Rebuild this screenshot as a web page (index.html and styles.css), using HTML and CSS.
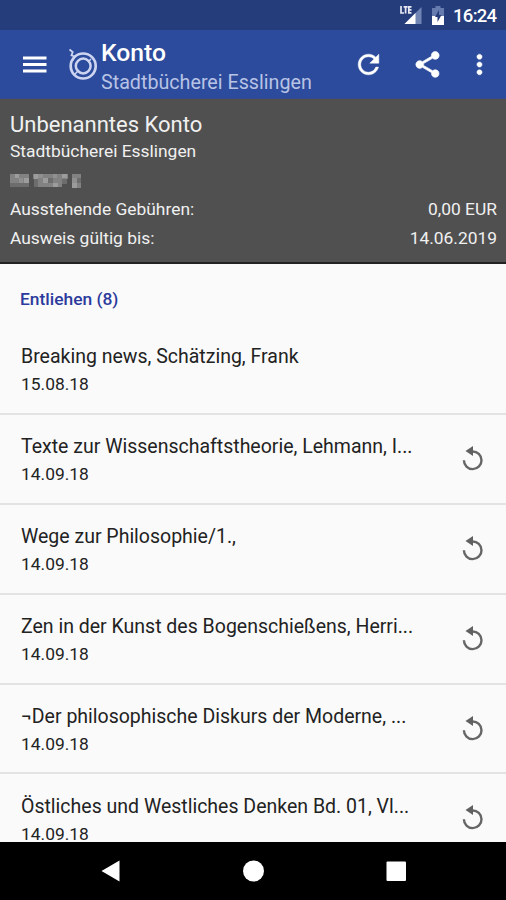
FILE: index.html
```html
<!DOCTYPE html>
<html lang="de">
<head>
<meta charset="utf-8">
<title>Konto</title>
<link rel="stylesheet" href="styles.css">
</head>
<body>
<svg class="defs" width="0" height="0">
  <symbol id="renew" viewBox="0 0 34 34"><path d="M17.500 9.500a8.800 8.800 0 1 1-8.600 8.800" fill="none" stroke="#666" stroke-width="2.400"/><path d="M10.500 9L18 4v10z"/></symbol>
</svg>
<div class="status">
  <svg class="signal" width="22" height="19" viewBox="0 0 22 19">
    <path d="M21.500 1V18H4.500z" fill="#7185b5"/><path d="M15.500 7V18H4.500z" fill="#fff"/>
    <path d="M1 0V7H4M3.600 .8H7.600M5.600 .8V7.500M11.500 .8H8.800V6.800H11.500M8.800 3.800H11.500" fill="none" stroke="#e6e9f2" stroke-width="1.700"/>
  </svg>
  <svg class="battery" width="12" height="19" viewBox="0 0 12 19">
    <path d="M3.500 0h5v2H12v9H0V2h3.500z" fill="#667bae"/><path d="M0 10h12v9H0z" fill="#fff"/><path d="M7 4L3 11h2.500v5L9.500 9H7z" fill="#263d7c"/>
  </svg>
  <span class="clock">16:24</span>
</div>
<header class="appbar">
  <svg class="menu" width="24" height="18" viewBox="0 0 24 18"><path d="M0 .5h23.500v3H0zM0 7h23.500v3H0zM0 13.500h23.500v3H0z"/></svg>
  <svg class="logo" width="30" height="32" viewBox="0 0 30 32">
    <g fill="none" stroke="#cdd5f0"><circle cx="15.200" cy="18" r="12.500" stroke-width="2.700"/><circle cx="15.200" cy="18" r="7.400" stroke-width="2.500"/><path d="M6 27l5-5M20 14l3-3" stroke-width="1.500"/><path d="M1.500 1.500l3.200 2.500-1.200 3.500 3.500 1-2.500 4" stroke-width="1.800"/></g>
  </svg>
  <div class="titles"><div class="title">Konto</div><div class="subtitle">Stadtbücherei Esslingen</div></div>
  <svg class="refresh" width="31" height="31" viewBox="0 0 24 24"><path d="M17.650 6.350C16.200 4.900 14.210 4 12 4c-4.420 0-7.990 3.580-7.990 8s3.570 8 7.990 8c3.730 0 6.840-2.550 7.730-6h-2.080c-.82 2.330-3.040 4-5.650 4-3.310 0-6-2.690-6-6s2.690-6 6-6c1.660 0 3.140.69 4.220 1.780L13 11h7V4l-2.350 2.350z" stroke="#fff" stroke-width=".35"/></svg>
  <svg class="share" width="31" height="31" viewBox="0 0 24 24"><path d="M18 16.080c-.76 0-1.440.3-1.960.77L8.910 12.700c.05-.23.09-.46.09-.7s-.04-.47-.09-.7l7.050-4.110c.54.5 1.250.81 2.040.81 1.660 0 3-1.340 3-3s-1.340-3-3-3-3 1.340-3 3c0 .24.04.47.09.7L8.040 9.810C7.500 9.310 6.790 9 6 9c-1.660 0-3 1.340-3 3s1.340 3 3 3c.79 0 1.500-.31 2.040-.81l7.120 4.160c-.05.21-.08.43-.08.65 0 1.610 1.310 2.920 2.920 2.920s2.920-1.310 2.920-2.920-1.310-2.920-2.920-2.920z" stroke="#fff" stroke-width=".5"/></svg>
  <svg class="more" width="31" height="31" viewBox="0 0 24 24"><path d="M12 8c1.100 0 2-.9 2-2s-.9-2-2-2-2 .9-2 2 .9 2 2 2zm0 2c-1.100 0-2 .9-2 2s.9 2 2 2 2-.9 2-2-.9-2-2-2zm0 6c-1.100 0-2 .9-2 2s.9 2 2 2 2-.9 2-2-.9-2-2-2z" stroke="#fff" stroke-width=".35"/></svg>
</header>
<section class="account">
  <div class="name">Unbenanntes Konto</div>
  <div class="library">Stadtbücherei Esslingen</div>
  <svg class="number" width="72" height="16" viewBox="0 0 72 16">
    <path d="M0 1h19v9H0zM23 1h35v5H23zM28 6h24v8H28zM62 1h9v14h-9z" fill="#828282"/>
    <path d="M5 1h4v4H5zM14 5h5v5h-5zM24 1h4v5h-4zM33 5h5v5h-5zM43 10h5v4h-5zM52 1h5v4h-5zM62 10h5v5h-5z" fill="#9c9c9c"/>
    <path d="M0 10h5v4H0zM9 10h5v4H9zM14 10h5v4h-5zM24 6h4v8h-4zM38 5h5v5h-5zM52 6h5v5h-5zM67 5h4v5h-4zM5 10h4v4H5z" fill="#6d6d6d"/>
    <path d="M9 5h4v5H9zM28 1h5v4h-5zM43 1h4v4h-4zM62 5h5v5h-5z" fill="#909090"/>
  </svg>
  <div class="line"><span>Ausstehende Gebühren:</span><span>0,00 EUR</span></div>
  <div class="line"><span>Ausweis gültig bis:</span><span class="date">14.06.2019</span></div>
</section>
<main class="list">
  <h2>Entliehen (8)</h2>
  <div class="item"><div class="text"><div class="book">Breaking news, Schätzing, Frank</div><div class="due">15.08.18</div></div></div>
  <div class="item"><div class="text"><div class="book">Texte zur Wissenschaftstheorie, Lehmann, I...</div><div class="due">14.09.18</div></div><svg class="renew"><use href="#renew"/></svg></div>
  <div class="item"><div class="text"><div class="book">Wege zur Philosophie/1.,</div><div class="due">14.09.18</div></div><svg class="renew"><use href="#renew"/></svg></div>
  <div class="item"><div class="text"><div class="book">Zen in der Kunst des Bogenschießens, Herri...</div><div class="due">14.09.18</div></div><svg class="renew"><use href="#renew"/></svg></div>
  <div class="item"><div class="text"><div class="book">¬Der philosophische Diskurs der Moderne, ...</div><div class="due">14.09.18</div></div><svg class="renew"><use href="#renew"/></svg></div>
  <div class="item"><div class="text"><div class="book">Östliches und Westliches Denken Bd. 01, Vl...</div><div class="due">14.09.18</div></div><svg class="renew"><use href="#renew"/></svg></div>
</main>
<nav class="nav">
  <svg viewBox="0 0 24 24"><path d="M21.500 1.500v21L3.500 12z"/></svg>
  <svg viewBox="0 0 24 24"><circle cx="12.500" cy="12" r="10.500"/></svg>
  <svg viewBox="0 0 24 24"><rect x="2.500" y="2.500" width="19.500" height="19.500" rx="1"/></svg>
</nav>
</body>
</html>
```
FILE: styles.css
```css
* { box-sizing: border-box; }
body { margin: 0; width: 506px; height: 900px; overflow: hidden; display: flex; flex-direction: column; font-family: Roboto, sans-serif; background: #fafafa; color: #222; white-space: nowrap; }
.defs { position: absolute; }
.status { height: 30px; flex: none; background: #263d7c; display: flex; justify-content: flex-end; align-items: center; padding: 1px 9px 0 0; color: #fff; }
.signal { margin-right: 10px; }
.battery { margin-right: 9px; }
.clock { width: 44px; font-size: 18.500px; font-weight: 500; line-height: 28px; letter-spacing: -0.7px; }
.appbar { height: 69px; flex: none; background: #2c4b9c; display: flex; align-items: center; padding-left: 23px; fill: #fff; border-bottom: 1px solid #38488a; }
.menu { margin-top: 2px; }
.logo { margin-left: 21px; }
.titles { margin-left: 3px; width: 252px; height: 69px; padding-top: 8px; }
.title { font-size: 24.700px; font-weight: 500; line-height: 29px; color: #fff; }
.subtitle { font-size: 19.700px; line-height: 32px; color: #b8c3e5; }
.share { margin-left: 28px; }
.more { margin-left: 21px; }
.account { height: 165px; flex: none; background: #505050; color: #f0f0f0; padding: 12px 9px 0 10px; border-bottom: 2px solid #222; display: flex; flex-direction: column; }
.name { font-size: 22px; line-height: 27px; }
.library { font-size: 17.400px; line-height: 26px; }
.number { margin: 9px 0 6px; filter: blur(0.6px); }
.line { font-size: 17.400px; line-height: 29px; display: flex; justify-content: space-between; }
.list { flex: 1; min-height: 0; overflow: hidden; }
h2 { margin: 0; height: 61px; padding: 23px 0 0 20px; font-size: 17.400px; line-height: 24px; font-weight: 500; color: #2b3a9c; }
.item { height: 89.900px; border-bottom: 2px solid #e3e3e3; display: flex; align-items: center; justify-content: space-between; padding: 0 17px 0 21px; }
.text { padding-top: 3px; }
.book { font-size: 19.500px; line-height: 28px; }
.due { font-size: 17.400px; line-height: 26px; }
.renew { width: 34px; height: 34px; fill: #606060; }
.nav { height: 58px; flex: none; background: #000; display: flex; justify-content: center; align-items: center; gap: 119px; fill: #fff; }
.nav svg { width: 24px; height: 24px; }
```
